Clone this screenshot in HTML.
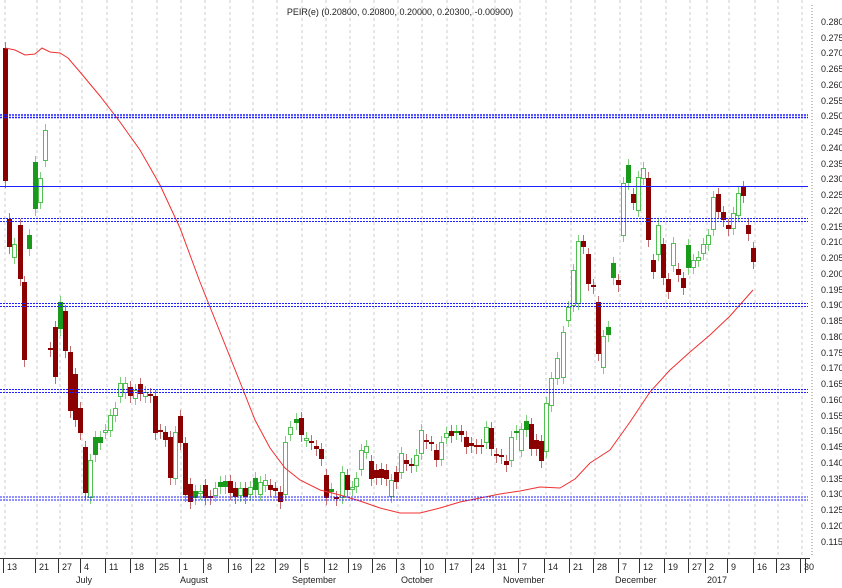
<!DOCTYPE html>
<html><head><meta charset="utf-8"><style>
body{margin:0;background:#fff;width:842px;height:588px;overflow:hidden;font-family:"Liberation Sans",sans-serif}
svg{position:absolute;left:0;top:0}
text{font-family:"Liberation Sans",sans-serif;font-size:9px;fill:#222}
</style></head><body>
<svg width="842" height="588" id="s">
<g stroke="#ccc" stroke-dasharray="3,3" stroke-width="1">
<path d="M5 0V558M37 0V558M60 0V558M82 0V558M107 0V558M132 0V558M157 0V558M181 0V558M205 0V558M230 0V558M253 0V558M277 0V558M302 0V558M326 0V558M350 0V558M374 0V558M398 0V558M422 0V558M447 0V558M473 0V558M495 0V558M520 0V558M546 0V558M571 0V558M595 0V558M620 0V558M641 0V558M666 0V558M690 0V558M707 0V558M729 0V558M755 0V558M778 0V558M802 0V558"/>
</g>
<g id="c"></g>
<polyline fill="none" stroke="#f03030" stroke-width="1" points="5,48 15,50 25,55 35,54 42,48 50,52 60,53 68,58 80,72 100,96 120,122 140,150 160,185 180,228 200,282 220,332 240,382 255,420 270,448 285,468 300,480 320,490 340,495 360,501 380,508 400,513 420,513 440,508 460,502 480,498 500,494 520,491 540,487 560,488 575,479 590,463 610,450 630,422 650,392 670,370 690,352 710,335 730,316 753,290"/>
<g fill="none" stroke="#2020ff">
<path d="M0 115H808M0 117.5H808" stroke-dasharray="2,1" stroke-width="1.5"/>
<path d="M0 186.5H808" stroke-width="1"/>
<path d="M0 218.5H808M0 221.5H808" stroke-dasharray="2,1"/>
<path d="M0 303.5H808M0 306.5H808" stroke-dasharray="2,1"/>
<path d="M0 389.5H808M0 392.5H808" stroke-dasharray="2,1"/>
<path d="M0 497H808M0 500H808" stroke-dasharray="2,1"/>
</g>
<path d="M812 5V555" stroke="#888" stroke-dasharray="1,2"/>
<path d="M0 558.5H810" stroke="#333"/>
<g id="ax"></g>
<text x="400" y="15" text-anchor="middle" font-size="9">PEIR(e) (0.20800, 0.20800, 0.20000, 0.20300, -0.00900)</text>
<g>
<text x="821" y="25">0.280</text><text x="821" y="41">0.275</text><text x="821" y="56">0.270</text><text x="821" y="72">0.265</text><text x="821" y="88">0.260</text><text x="821" y="104">0.255</text><text x="821" y="119">0.250</text><text x="821" y="135">0.245</text><text x="821" y="151">0.240</text><text x="821" y="167">0.235</text><text x="821" y="182">0.230</text><text x="821" y="198">0.225</text><text x="821" y="214">0.220</text><text x="821" y="230">0.215</text><text x="821" y="245">0.210</text><text x="821" y="261">0.205</text><text x="821" y="277">0.200</text><text x="821" y="293">0.195</text><text x="821" y="308">0.190</text><text x="821" y="324">0.185</text><text x="821" y="340">0.180</text><text x="821" y="356">0.175</text><text x="821" y="371">0.170</text><text x="821" y="387">0.165</text><text x="821" y="403">0.160</text><text x="821" y="419">0.155</text><text x="821" y="434">0.150</text><text x="821" y="450">0.145</text><text x="821" y="466">0.140</text><text x="821" y="482">0.135</text><text x="821" y="497">0.130</text><text x="821" y="513">0.125</text><text x="821" y="529">0.120</text><text x="821" y="545">0.115</text>
</g>
<g>
<text x="7" y="570">13</text><text x="39" y="570">21</text><text x="62" y="570">27</text><text x="84" y="570">4</text><text x="109" y="570">11</text><text x="134" y="570">18</text><text x="159" y="570">25</text><text x="183" y="570">1</text><text x="207" y="570">8</text><text x="232" y="570">16</text><text x="255" y="570">22</text><text x="279" y="570">29</text><text x="304" y="570">5</text><text x="328" y="570">12</text><text x="352" y="570">19</text><text x="376" y="570">26</text><text x="400" y="570">3</text><text x="424" y="570">10</text><text x="449" y="570">17</text><text x="475" y="570">24</text><text x="497" y="570">31</text><text x="522" y="570">7</text><text x="548" y="570">14</text><text x="573" y="570">21</text><text x="597" y="570">28</text><text x="622" y="570">7</text><text x="643" y="570">12</text><text x="668" y="570">19</text><text x="692" y="570">27</text><text x="709" y="570">2</text><text x="731" y="570">9</text><text x="757" y="570">16</text><text x="780" y="570">23</text><text x="804" y="570">30</text>
<text x="76" y="583">July</text><text x="180" y="583">August</text><text x="292" y="583">September</text><text x="401" y="583">October</text><text x="503" y="583">November</text><text x="615" y="583">December</text><text x="707" y="583">2017</text>
</g>
</svg>
<script>
var d=[[5,'r',48,181],[9,'r',219,247],[14,'g',244,257],[20,'r',225,279],[24,'r',282,360],[29,'G',235,249],[35,'G',162,209],[40,'g',178,202],[45,'g',130,160],[50,'r',348,350],[55,'r',327,377],[60,'G',302,329],[65,'r',311,351],[70,'r',352,411],[75,'r',374,420],[80,'r',408,433],[85,'r',447,493],[90,'g',460,497],[95,'G',437,455],[100,'G',437,443],[105,'g',430,432],[110,'g',415,430],[115,'g',408,415],[120,'g',383,396],[125,'g',383,392],[130,'r',387,396],[135,'g',390,398],[140,'r',384,394],[145,'g',392,396],[150,'r',394,396],[155,'r',396,433],[160,'r',430,432],[165,'r',432,440],[170,'r',437,478],[175,'g',432,478],[180,'r',416,443],[185,'r',443,495],[190,'r',484,502],[195,'G',491,498],[200,'g',491,493],[205,'r',485,498],[210,'r',496,498],[215,'g',488,495],[220,'G',482,487],[225,'G',481,487],[230,'r',481,493],[235,'r',488,497],[240,'g',488,495],[245,'r',488,497],[250,'g',487,494],[255,'G',478,490],[260,'g',482,494],[265,'g',480,485],[270,'r',485,490],[275,'r',488,491],[280,'r',492,502],[285,'g',442,494],[290,'g',427,434],[296,'G',419,423],[301,'r',418,435],[306,'g',438,440],[311,'r',441,442],[316,'r',446,449],[321,'r',449,459],[326,'r',475,498],[331,'G',489,492],[336,'r',497,498],[342,'g',472,497],[347,'r',475,490],[352,'g',487,489],[356,'g',478,486],[361,'g',450,469],[366,'g',446,452],[371,'r',461,479],[376,'r',470,478],[381,'r',469,478],[386,'r',470,479],[391,'g',480,496],[396,'r',472,482],[401,'g',453,472],[406,'r',460,464],[411,'r',464,465],[416,'g',455,465],[421,'g',430,453],[426,'r',440,441],[431,'r',442,443],[436,'r',450,460],[441,'g',442,459],[446,'g',433,437],[451,'r',431,436],[456,'G',431,432],[461,'r',431,435],[466,'r',437,447],[471,'r',443,446],[476,'r',445,446],[481,'r',445,446],[486,'g',427,442],[491,'r',428,449],[496,'r',454,455],[501,'r',455,456],[506,'r',461,465],[511,'g',437,460],[516,'G',431,432],[521,'g',429,450],[526,'G',421,430],[531,'r',424,449],[536,'r',440,449],[541,'r',441,461],[546,'g',403,451],[551,'g',378,405],[557,'g',358,378],[563,'g',332,377],[568,'g',307,320],[573,'g',270,305],[578,'g',241,303],[583,'r',241,247],[588,'r',254,284],[593,'r',285,287],[598,'r',302,354],[603,'g',336,367],[608,'G',327,335],[613,'G',263,278],[618,'r',280,285],[623,'g',183,235],[628,'G',165,183],[633,'r',194,203],[638,'g',177,210],[643,'g',168,178],[648,'r',178,240],[653,'r',260,272],[658,'g',225,254],[663,'r',244,278],[668,'r',279,292],[673,'g',243,265],[678,'r',269,275],[683,'r',278,288],[688,'G',245,268],[693,'g',260,267],[698,'g',257,260],[703,'g',244,253],[708,'g',235,244],[713,'g',197,229],[718,'r',194,212],[723,'r',212,220],[728,'r',225,229],[733,'g',213,228],[738,'g',193,215],[743,'r',187,196],[748,'r',225,234],[753,'r',248,262]];
var h='';d.forEach(function(c){var x=c[0],t=c[1],a=c[2],b=c[3];if(b-a<2)b=a+2;
var col=t=='r'?'#8b0000':'#1a9a1a',wc=t=='r'?'#c07070':'#80d080';
h+='<line x1="'+(x+.5)+'" x2="'+(x+.5)+'" y1="'+(a-6)+'" y2="'+(b+7)+'" stroke="'+wc+'"/>';
if(t=='g')h+='<rect x="'+(x-1.5)+'" y="'+(a+.5)+'" width="4" height="'+(b-a)+'" fill="#fff" stroke="#50c050"/>';
else h+='<rect x="'+(x-2)+'" y="'+a+'" width="5" height="'+(b-a)+'" fill="'+col+'"/>';});
document.getElementById('c').innerHTML=h;
var xs=[3,35,58,80,105,130,155,179,203,228,251,275,300,324,348,372,396,420,445,471,493,518,544,569,593,618,639,664,688,705,727,753,776,800,805],g='';
xs.forEach(function(x){g+='<line x1="'+(x+.5)+'" x2="'+(x+.5)+'" y1="559" y2="573" stroke="#333"/>';});
document.getElementById('ax').innerHTML=g;
</script>
</body></html>
